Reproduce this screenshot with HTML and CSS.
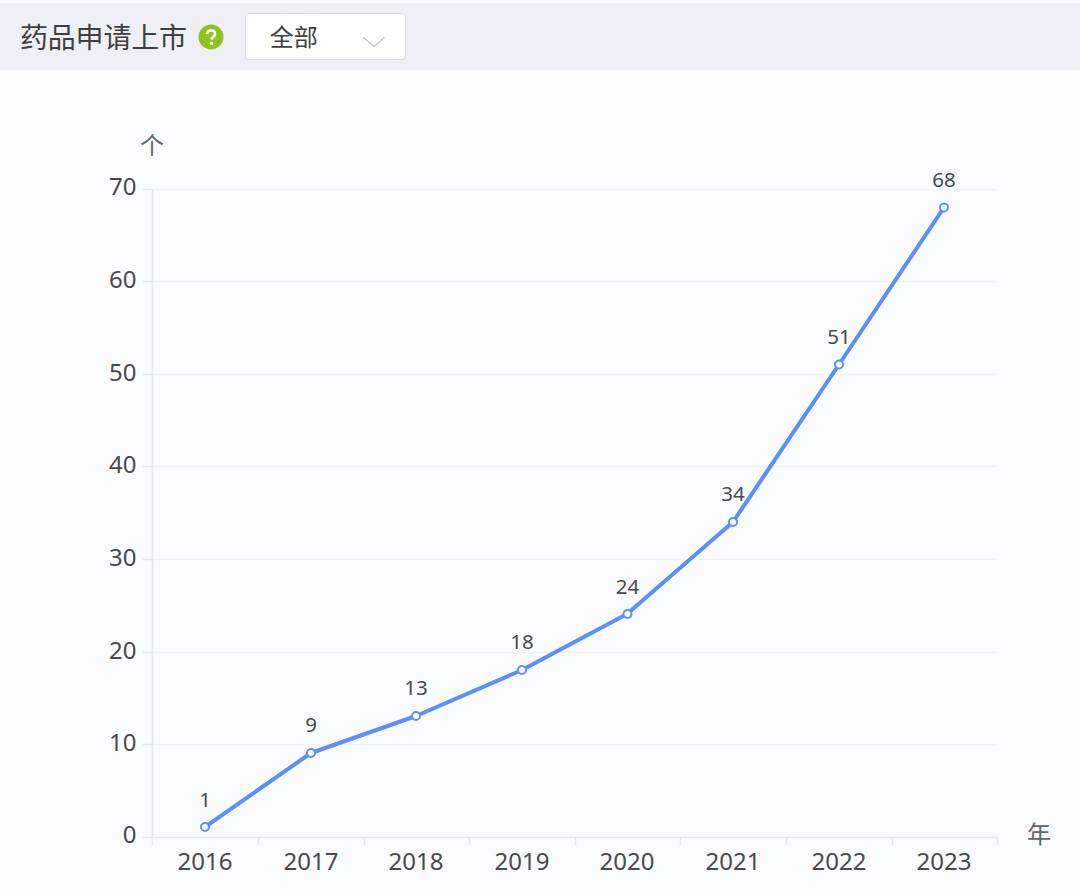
FILE: index.html
```html
<!DOCTYPE html>
<html lang="zh">
<head>
<meta charset="utf-8">
<title>药品申请上市</title>
<link rel="stylesheet" href="styles.css">
</head>
<body>
<div class="page">
  <header class="toolbar">
    <h1 class="title">药品申请上市</h1>
    <svg class="help" viewBox="0 0 26 26" width="26" height="26" aria-hidden="true">
      <circle cx="13" cy="13" r="12.5" fill="#8fc31f"/>
      <path d="M9 10.2c.2-2.4 1.9-3.7 4.1-3.7 2.4 0 4 1.4 4 3.4 0 1.6-.9 2.4-2 3.2-1 .7-1.4 1.2-1.4 2.4" fill="none" stroke="#fff" stroke-width="2.6"/>
      <circle cx="13.6" cy="19.4" r="1.7" fill="#fff"/>
    </svg>
    <div class="select">
      <span class="select-value">全部</span>
      <svg class="chevron" viewBox="0 0 24 12" width="24" height="12" aria-hidden="true">
        <path d="M1.5 1.5 12 10.5 22.5 1.5" fill="none" stroke="#c4c7d0" stroke-width="1.5"/>
      </svg>
    </div>
  </header>
  <main class="chart-area">
    <svg class="chart" viewBox="0 70 1080 824" width="1080" height="824">
      <g class="grid">
        <path d="M152 189.500H997"/><path d="M152 281.500H997"/><path d="M152 374.500H997"/>
        <path d="M152 466.500H997"/><path d="M152 559.500H997"/><path d="M152 652.500H997"/><path d="M152 744.500H997"/>
      </g>
      <g class="axis">
        <path d="M152.500 189V845"/>
        <path d="M143 837.500H997.500"/>
        <path d="M143 189.500h9M143 281.500h9M143 374.500h9M143 466.500h9M143 559.500h9M143 652.500h9M143 744.500h9"/>
        <path d="M258.500 837v8M364.500 837v8M469.500 837v8M575.500 837v8M680.500 837v8M786.500 837v8M892.500 837v8M997.500 837v8"/>
      </g>
      <g class="y-label">
        <text x="136.500" y="195">70</text><text x="136.500" y="288">60</text><text x="136.500" y="381">50</text>
        <text x="136.500" y="473">40</text><text x="136.500" y="566">30</text><text x="136.500" y="659">20</text>
        <text x="136.500" y="751">10</text><text x="136.500" y="843">0</text>
      </g>
      <g class="x-label">
        <text x="205" y="870">2016</text><text x="311" y="870">2017</text><text x="416" y="870">2018</text>
        <text x="522" y="870">2019</text><text x="627" y="870">2020</text><text x="733" y="870">2021</text>
        <text x="839" y="870">2022</text><text x="944" y="870">2023</text>
      </g>
      <text class="unit" x="152" y="154">个</text>
      <text class="unit" x="1039" y="843">年</text>
      <polyline class="line" points="205,827 311,753 416,716 522,670 627,614 733,522 839,364.500 944,207.500"/>
      <g class="dot">
        <circle cx="205" cy="827" r="4"/><circle cx="311" cy="753" r="4"/><circle cx="416" cy="716" r="4"/>
        <circle cx="522" cy="670" r="4"/><circle cx="627.500" cy="614" r="4"/><circle cx="733" cy="522" r="4"/>
        <circle cx="839" cy="364.500" r="4"/><circle cx="944" cy="207.500" r="4"/>
      </g>
      <g class="value">
        <text x="205" y="807">1</text><text x="311" y="732">9</text><text x="416" y="695">13</text>
        <text x="522" y="649">18</text><text x="627.500" y="594">24</text><text x="733" y="501">34</text>
        <text x="839" y="344">51</text><text x="944" y="187">68</text>
      </g>
    </svg>
  </main>
</div>
</body>
</html>
```

FILE: styles.css
```css
* { box-sizing: border-box; }
html, body { margin: 0; padding: 0; }
body {
  background: #fafbfd;
  font-family: "Noto Sans", "Noto Sans CJK SC", sans-serif;
  color: #404040;
}
.page {
  width: 1080px;
  height: 894px;
  padding-top: 3px;
  display: flex;
  flex-direction: column;
  overflow: hidden;
}
.toolbar {
  height: 67px;
  flex: none;
  display: flex;
  align-items: center;
  padding: 0 0 0 20px;
  background: #eff0f5;
}
.title {
  margin: 0;
  font-size: 28px;
  line-height: 36px;
  font-weight: 400;
  letter-spacing: -0.2px;
  color: #404040;
}
.help {
  margin-left: 11px;
  flex: none;
}
.select {
  margin-left: 21px;
  width: 161px;
  height: 47px;
  display: flex;
  align-items: center;
  justify-content: space-between;
  padding: 0 19px 0 24px;
  background: #fff;
  border: 1px solid #dcdee6;
  border-radius: 4px;
}
.select-value {
  font-size: 24px;
  line-height: 32px;
  color: #404040;
}
.chevron { margin-top: 11px; }
.chart-area { flex: 1; }
.chart { display: block; }
.grid path { stroke: #f1f3f7; stroke-width: 1.500; fill: none; }
.axis path { stroke: #e3e8f0; stroke-width: 1.500; fill: none; }
.y-label text {
  font-size: 24px;
  fill: #4a4a4a;
  text-anchor: end;
}
.x-label text {
  font-size: 24px;
  fill: #4a4a4a;
  text-anchor: middle;
}
.unit {
  font-size: 24px;
  fill: #666;
  text-anchor: middle;
}
.value text {
  font-size: 20.500px;
  fill: #4a4a4a;
  text-anchor: middle;
}
.line {
  fill: none;
  stroke: #5b8ff9;
  stroke-width: 4;
  stroke-linejoin: round;
}
.dot circle {
  fill: #fff;
  stroke: #5b8ff9;
  stroke-width: 2;
}
```
